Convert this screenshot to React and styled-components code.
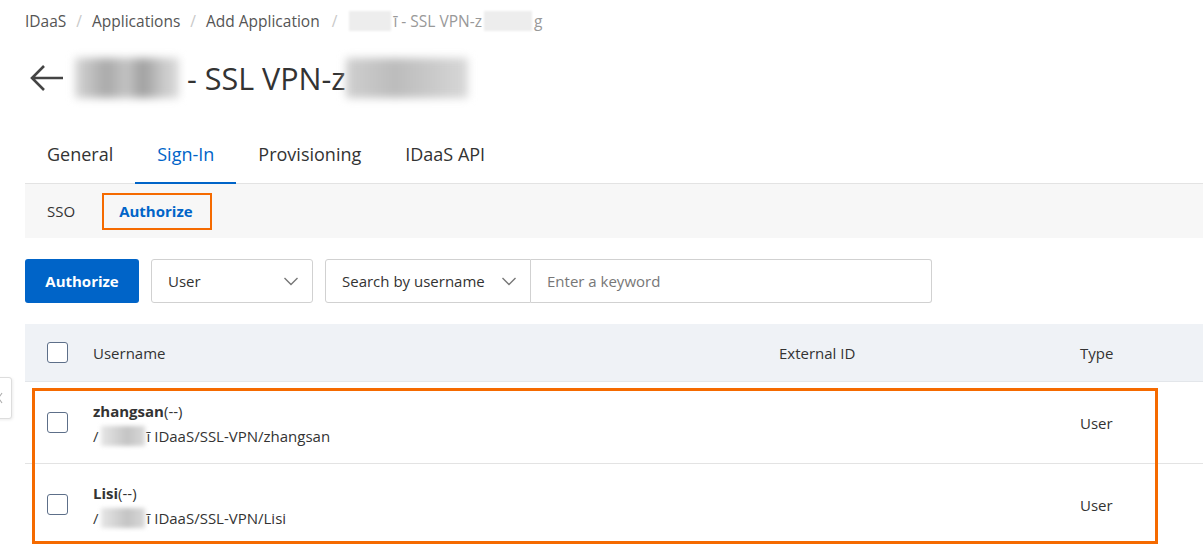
import React from "react";
import styled, { createGlobalStyle } from "styled-components";

const GlobalStyle = createGlobalStyle`
  html, body {
    margin: 0;
    padding: 0;
    background: #ffffff;
  }
  body {
    font-family: "Open Sans", "Noto Sans", sans-serif;
    color: #333333;
    overflow: hidden;
  }
`;

const Page = styled.div`
  position: relative;
  width: 1203px;
  height: 544px;
  overflow: hidden;
  padding-left: 25px;
  box-sizing: border-box;
`;

const Breadcrumb = styled.div`
  display: flex;
  align-items: center;
  height: 40px;
  padding-top: 1px;
  font-size: 15.5px;
  color: #555555;
  white-space: nowrap;
`;

const Crumb = styled.span`
  color: ${(p) => (p.$current ? "#999999" : "#555555")};
  display: inline-flex;
  align-items: center;
  gap: ${(p) => (p.$current ? "2px" : "0")};
`;

const Sep = styled.span`
  color: #c8c8c8;
  margin: 0 ${(p) => p.$m || 10}px;
`;

const Blur = styled.span`
  display: inline-block;
  flex-shrink: 0;
  width: ${(p) => p.$w}px;
  height: ${(p) => p.$h}px;
  background: ${(p) => p.$bg || "#d9d9d9"};
  filter: blur(${(p) => p.$blur || 2}px);
  vertical-align: middle;
`;

const TitleRow = styled.div`
  display: flex;
  align-items: center;
  height: 74px;
  padding-left: 5px;
  font-size: 30.5px;
  color: #333333;
  white-space: nowrap;
`;

const TitleText = styled.span`
  margin-left: 8px;
`;

const Back = styled.svg`
  width: 34px;
  height: 28px;
  margin-right: 11px;
`;

const Tabs = styled.div`
  display: flex;
  margin-top: 10px;
  height: 58px;
  border-bottom: 1px solid #e3e3e3;
`;

const Tab = styled.div`
  display: flex;
  align-items: center;
  padding: 0 22px;
  font-size: 18px;
  color: ${(p) => (p.$active ? "#0064c8" : "#333333")};
  border-bottom: 2px solid ${(p) => (p.$active ? "#0064c8" : "transparent")};
  margin-bottom: -1px;
`;

const SubTabs = styled.div`
  display: flex;
  align-items: center;
  height: 54px;
  background: #f7f7f7;
  padding-left: 22px;
  gap: 44px;
`;

const SubTab = styled.div`
  position: relative;
  font-size: 15px;
  font-weight: ${(p) => (p.$active ? 700 : 400)};
  color: ${(p) => (p.$active ? "#0064c8" : "#333333")};
`;

const Highlight = styled.div`
  position: absolute;
  left: ${(p) => p.$l}px;
  top: ${(p) => p.$t}px;
  width: ${(p) => p.$w}px;
  height: ${(p) => p.$h}px;
  border: ${(p) => p.$b}px solid #f56a00;
  box-sizing: border-box;
  pointer-events: none;
`;

const Toolbar = styled.div`
  display: flex;
  align-items: center;
  margin-top: 21px;
  height: 44px;
  gap: 12px;
`;

const PrimaryButton = styled.button`
  height: 44px;
  width: 114px;
  border: none;
  border-radius: 3px;
  background: #0064c8;
  color: #ffffff;
  font-family: "Open Sans", sans-serif;
  font-size: 15px;
  font-weight: 700;
`;

const Select = styled.div`
  display: flex;
  align-items: center;
  justify-content: space-between;
  box-sizing: border-box;
  height: 44px;
  width: ${(p) => p.$w}px;
  padding: 0 12px 0 16px;
  border: 1px solid #d1d1d1;
  border-radius: ${(p) => (p.$joined ? "3px 0 0 3px" : "3px")};
  font-size: 15px;
  color: #333333;
  background: #ffffff;
`;

const SearchGroup = styled.div`
  display: flex;
`;

const Input = styled.div`
  display: flex;
  align-items: center;
  box-sizing: border-box;
  height: 44px;
  width: 401px;
  padding-left: 16px;
  border: 1px solid #d1d1d1;
  border-left: none;
  border-radius: 0 3px 3px 0;
  font-size: 15px;
  color: #777777;
`;

const Table = styled.div`
  margin-top: 21px;
  width: 1200px;
`;

const HeadRow = styled.div`
  display: grid;
  grid-template-columns: 68px 686px 301px 1fr;
  align-items: center;
  height: 57px;
  background: #eff2f6;
  border-bottom: 1px solid #e3e6ea;
  font-size: 15px;
  color: #333333;
`;

const Body = styled.div`
  position: relative;
`;

const Row = styled.div`
  display: grid;
  grid-template-columns: 68px 686px 301px 1fr;
  align-items: center;
  height: 81px;
  border-bottom: 1px solid #e3e3e3;
  font-size: 15px;
  color: #333333;
`;

const CheckCell = styled.div`
  padding-left: 22px;
  display: flex;
  align-items: center;
`;

const Checkbox = styled.span`
  display: inline-block;
  width: 19px;
  height: 19px;
  border: 1px solid #5d6f89;
  border-radius: 3px;
  background: #ffffff;
`;

const UserCell = styled.div`
  display: flex;
  flex-direction: column;
  gap: 3px;
  padding-top: 2px;
`;

const Name = styled.div`
  line-height: 22px;
  b {
    font-weight: 700;
  }
`;

const PathLine = styled.div`
  line-height: 22px;
  display: flex;
  align-items: center;
  white-space: nowrap;
  gap: 2px;
`;

const SideHandle = styled.div`
  position: absolute;
  left: -4px;
  top: 377px;
  width: 16px;
  height: 42px;
  box-sizing: border-box;
  border: 1px solid #dddddd;
  border-radius: 0 3px 3px 0;
  background: #ffffff;
  display: flex;
  align-items: center;
  justify-content: flex-end;
  padding-right: 1px;
  box-shadow: 1px 1px 3px rgba(0, 0, 0, 0.08);
`;

const Chevron = ({ dir = "down", size = 18, color = "#777" }) => (
  <svg width={size} height={size} viewBox="0 0 18 18" fill="none">
    {dir === "down" ? (
      <path d="M2.5 6 L9 12.5 L15.5 6" stroke={color} strokeWidth="1.4" />
    ) : (
      <path d="M7 2 L2 9 L7 16" stroke={color} strokeWidth="1.4" />
    )}
  </svg>
);

const users = [
  { name: "zhangsan", path: "IDaaS/SSL-VPN/zhangsan", type: "User" },
  { name: "Lisi", path: "IDaaS/SSL-VPN/Lisi", type: "User" },
];

export default function App() {
  return (
    <>
      <GlobalStyle />
      <Page>
        <Breadcrumb>
          <Crumb>IDaaS</Crumb>
          <Sep>/</Sep>
          <Crumb>Applications</Crumb>
          <Sep>/</Sep>
          <Crumb>Add Application</Crumb>
          <Sep $m={12}>/</Sep>
          <Crumb $current>
            <Blur $w={42} $h={20} $bg="#ededed" $blur={1} />
            ī - SSL VPN-z
            <Blur $w={48} $h={20} $bg="#ededed" $blur={1} />
            <span>g</span>
          </Crumb>
        </Breadcrumb>

        <TitleRow>
          <Back viewBox="0 0 34 28" fill="none">
            <path d="M33 14 H2 M14 2 L2 14 L14 26" stroke="#444" strokeWidth="2.6" />
          </Back>
          <Blur $w={104} $h={40} $bg="linear-gradient(90deg,#d6d6d6,#a9a9a9 30%,#c4c4c4 50%,#9f9f9f 65%,#c9c9c9 85%,#dadada)" $blur={4} />
          <TitleText>- SSL VPN-z</TitleText>
          <Blur $w={122} $h={40} $bg="linear-gradient(90deg,#cfcfcf,#bcbcbc 40%,#c9c9c9 70%,#d8d8d8)" $blur={4} />
        </TitleRow>

        <Tabs>
          <Tab>General</Tab>
          <Tab $active>Sign-In</Tab>
          <Tab>Provisioning</Tab>
          <Tab>IDaaS API</Tab>
        </Tabs>

        <SubTabs>
          <SubTab>SSO</SubTab>
          <SubTab $active>
            Authorize
            <Highlight $l={-17} $t={-8} $w={110} $h={37} $b={2} />
          </SubTab>
        </SubTabs>

        <Toolbar>
          <PrimaryButton>Authorize</PrimaryButton>
          <Select $w={162}>
            User
            <Chevron />
          </Select>
          <SearchGroup>
            <Select $w={206} $joined>
              Search by username
              <Chevron />
            </Select>
            <Input>Enter a keyword</Input>
          </SearchGroup>
        </Toolbar>

        <Table>
          <HeadRow>
            <CheckCell>
              <Checkbox />
            </CheckCell>
            <div>Username</div>
            <div>External ID</div>
            <div>Type</div>
          </HeadRow>
          <Body>
            {users.map((u) => (
              <Row key={u.name}>
                <CheckCell>
                  <Checkbox />
                </CheckCell>
                <UserCell>
                  <Name>
                    <b>{u.name}</b>(--)
                  </Name>
                  <PathLine>
                    /<Blur $w={44} $h={20} $bg="linear-gradient(90deg,#e6e6e6,#c4c4c4 60%,#d9d9d9)" $blur={2} />
                    ī {u.path}
                  </PathLine>
                </UserCell>
                <div />
                <div>{u.type}</div>
              </Row>
            ))}
            <Highlight $l={7} $t={6} $w={1126} $h={156} $b={3} />
          </Body>
        </Table>

        <SideHandle>
          <Chevron dir="left" size={14} color="#aaa" />
        </SideHandle>
      </Page>
    </>
  );
}
